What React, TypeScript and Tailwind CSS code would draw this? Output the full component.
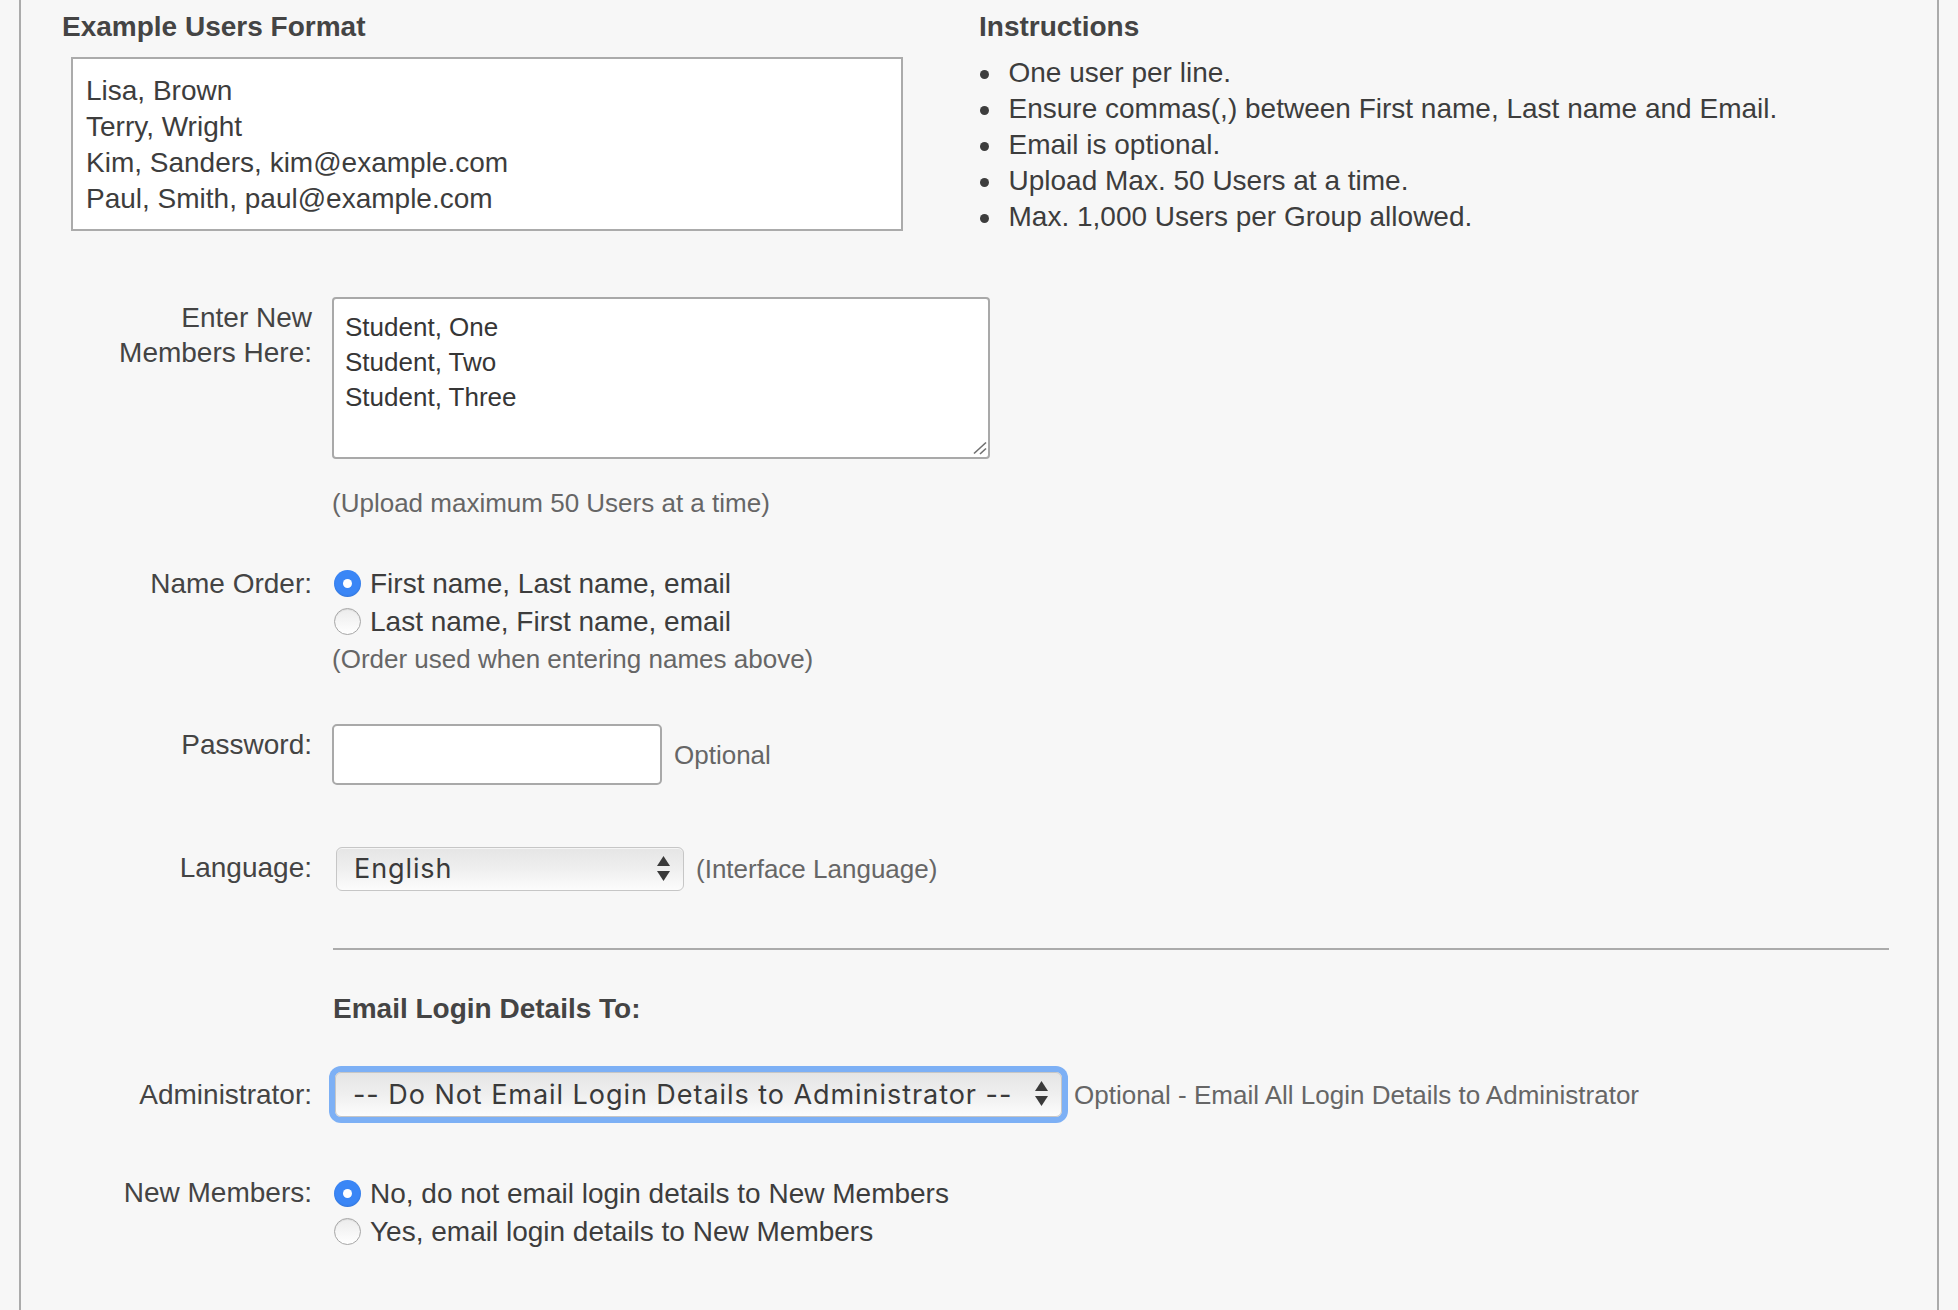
import React from "react";

const Radio = ({ checked }: { checked?: boolean }) =>
  checked ? (
    <span className="ml-[2px] flex h-[27px] w-[27px] shrink-0 items-center justify-center rounded-full bg-[#3a86f6] shadow-[inset_0_-1px_2px_rgba(0,0,0,0.12)]">
      <span className="block h-[9px] w-[9px] rounded-full bg-white" />
    </span>
  ) : (
    <span className="ml-[2px] block h-[27px] w-[27px] shrink-0 rounded-full border-[1.5px] border-[#a6a6a6] bg-linear-to-b from-[#ececec] to-white shadow-[inset_0_1px_1px_rgba(0,0,0,0.08)]" />
  );

const Arrows = () => (
  <svg width="13" height="26" viewBox="0 0 13 26" className="shrink-0">
    <polygon points="0,10 6.5,0 13,10" fill="#3a3a3a" />
    <polygon points="0,15 13,15 6.5,25" fill="#3a3a3a" />
  </svg>
);

const RadioRow = ({ checked, label }: { checked?: boolean; label: string }) => (
  <div className="flex h-[38px] items-center">
    <Radio checked={checked} />
    <span className="ml-[9px] whitespace-nowrap text-[28px] leading-[35px] text-[#3d3d3d]">{label}</span>
  </div>
);

export default function App() {
  return (
    <div className="min-h-[1310px] w-[1958px] bg-[#f7f7f7] font-['Liberation_Sans',Arial,sans-serif] text-[#444]">
      <div className="ml-[19px] min-h-[1310px] w-[1920px] border-x-2 border-[#ababab]">
        {/* Top section */}
        <div className="flex h-[231px] pt-[12px]">
          <div className="w-[958px] pl-[41px]">
            <h2 className="h-[30px] text-[28px] font-bold leading-[30px] text-[#444]">Example Users Format</h2>
            <div className="ml-[9px] mt-[15px] h-[174px] w-[832px] border-2 border-[#ababab] bg-white pl-[13px] pt-[13.5px] text-[28px] leading-[36px] text-[#3d3d3d]">
              <div>Lisa, Brown</div>
              <div>Terry, Wright</div>
              <div>Kim, Sanders, kim@example.com</div>
              <div>Paul, Smith, paul@example.com</div>
            </div>
          </div>
          <div>
            <h2 className="h-[30px] text-[28px] font-bold leading-[30px] text-[#444]">Instructions</h2>
            <ul className="mt-[12.5px] text-[28px] leading-[36.2px] text-[#3d3d3d]">
              {[
                "One user per line.",
                "Ensure commas(,) between First name, Last name and Email.",
                "Email is optional.",
                "Upload Max. 50 Users at a time.",
                "Max. 1,000 Users per Group allowed.",
              ].map((t) => (
                <li key={t} className="flex items-center">
                  <span className="ml-[0.5px] mt-[3px] block h-[9px] w-[9px] shrink-0 rounded-full bg-[#3d3d3d]" />
                  <span className="ml-[20px] whitespace-nowrap">{t}</span>
                </li>
              ))}
            </ul>
          </div>
        </div>

        {/* Enter new members */}
        <div className="mt-[66px] flex">
          <div className="w-[291px] pt-[2.6px] text-right text-[28px] leading-[35px]">
            Enter New
            <br />
            Members Here:
          </div>
          <div className="ml-[20px]">
            <div className="relative h-[162px] w-[658px] rounded-[4px] border-2 border-[#a9a9a9] bg-white pl-[11px] pt-[10.5px] text-[26px] leading-[35px] text-[#363636]">
              <div>Student, One</div>
              <div>Student, Two</div>
              <div>Student, Three</div>
              <svg width="14" height="14" viewBox="0 0 14 14" className="absolute bottom-[2px] right-[1px]">
                <line x1="1" y1="12.5" x2="13" y2="1.5" stroke="#6f6f6f" strokeWidth="1.6" />
                <line x1="7" y1="13" x2="13" y2="7.5" stroke="#6f6f6f" strokeWidth="1.6" />
              </svg>
            </div>
            <div className="mt-[26.5px] text-[26px] leading-[35px] text-[#666]">(Upload maximum 50 Users at a time)</div>
          </div>
        </div>

        {/* Name order */}
        <div className="mt-[43.7px] flex">
          <div className="w-[291px] pt-[1.5px] text-right text-[28px] leading-[35px]">Name Order:</div>
          <div className="ml-[20px]">
            <RadioRow checked label="First name, Last name, email" />
            <RadioRow label="Last name, First name, email" />
            <div className="mt-[2px] text-[26px] leading-[35px] text-[#666]">(Order used when entering names above)</div>
          </div>
        </div>

        {/* Password */}
        <div className="mt-[47px] flex">
          <div className="w-[291px] pt-[2.7px] text-right text-[28px] leading-[35px]">Password:</div>
          <div className="ml-[20px] flex items-center">
            <div className="h-[61px] w-[330px] rounded-[5px] border-2 border-[#a9a9a9] bg-white" />
            <span className="ml-[12px] mt-[2px] text-[26px] leading-[35px] text-[#666]">Optional</span>
          </div>
        </div>

        {/* Language */}
        <div className="mt-[62px] flex">
          <div className="w-[291px] pt-[2.75px] text-right text-[28px] leading-[35px]">Language:</div>
          <div className="ml-[20px] flex items-center">
            <div className="ml-[4px] flex h-[44px] w-[348px] items-center justify-between rounded-[6px] border border-[#c6c6c6] bg-linear-to-b from-[#e5e5e5] via-[#efefef] to-[#fcfcfc] pl-[17px] pr-[13px] font-['Inter',sans-serif] text-[27px] tracking-[0.9px] text-[#3a3a3a] shadow-[inset_0_1px_0_rgba(255,255,255,0.6)]">
              <span>English</span>
              <Arrows />
            </div>
            <span className="ml-[12px] text-[26px] leading-[35px] text-[#666]">(Interface Language)</span>
          </div>
        </div>

        {/* Divider */}
        <div className="ml-[312px] mt-[57px] h-[2px] w-[1556px] bg-[#ababab]" />

        <div className="ml-[312px] mt-[43px] text-[28px] font-bold leading-[32px] text-[#444]">Email Login Details To:</div>

        {/* Administrator */}
        <div className="mt-[46.4px] flex items-center">
          <div className="w-[291px] text-right text-[28px] leading-[35px]">Administrator:</div>
          <div className="ml-[20px] flex items-center">
            <div className="ml-[3px] flex h-[45px] w-[727px] items-center justify-between rounded-[6px] border border-[#c6c6c6] bg-linear-to-b from-[#e5e5e5] via-[#efefef] to-[#fcfcfc] pl-[17px] pr-[13px] font-['Inter',sans-serif] text-[27px] tracking-[0.95px] text-[#3a3a3a] shadow-[0_0_0_6px_#7db0f5]">
              <span className="mt-[2px] whitespace-nowrap">-- Do Not Email Login Details to Administrator --</span>
              <Arrows />
            </div>
            <span className="ml-[12px] mt-[3px] whitespace-nowrap text-[26px] leading-[35px] text-[#666]">
              Optional - Email All Login Details to Administrator
            </span>
          </div>
        </div>

        {/* New members */}
        <div className="mt-[58px] flex">
          <div className="w-[291px] pt-[0.3px] text-right text-[28px] leading-[35px]">New Members:</div>
          <div className="ml-[20px]">
            <RadioRow checked label="No, do not email login details to New Members" />
            <RadioRow label="Yes, email login details to New Members" />
          </div>
        </div>
      </div>
    </div>
  );
}
